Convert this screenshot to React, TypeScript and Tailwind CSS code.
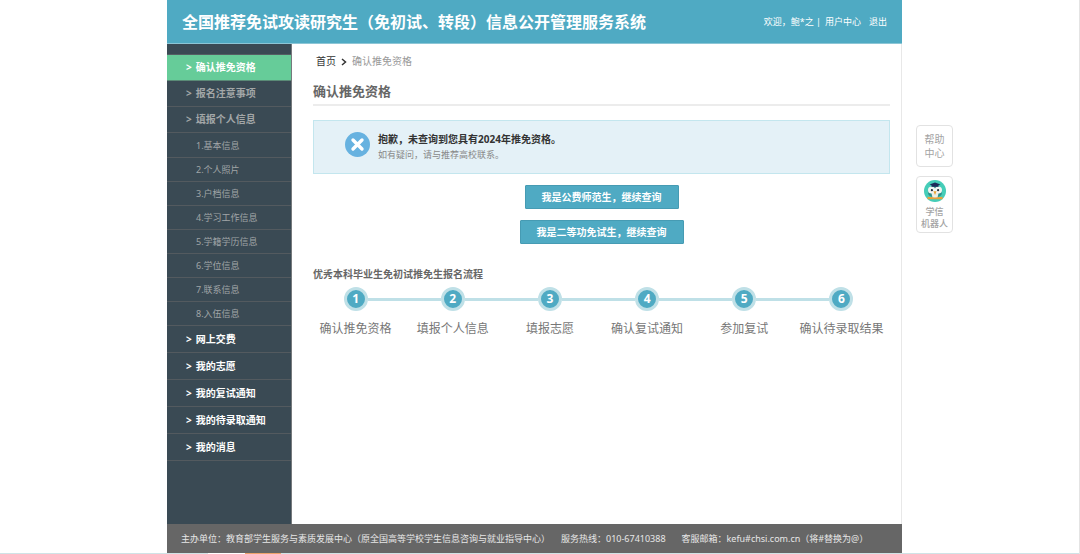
const intro = ["确认推免资格", "报名注意事项", "填报个人信息"];
const profile = [
  "1.基本信息",
  "2.个人照片",
  "3.户档信息",
  "4.学习工作信息",
  "5.学籍学历信息",
  "6.学位信息",
  "7.联系信息",
  "8.入伍信息",
];
const services = ["网上交费", "我的志愿", "我的复试通知", "我的待录取通知", "我的消息"];
const steps = ["确认推免资格", "填报个人信息", "填报志愿", "确认复试通知", "参加复试", "确认待录取结果"];

function Header() {
  return (
    <header className="flex h-11 items-center justify-between border-b border-[#8cc6d6] bg-[#4faac3] px-[15px] text-white">
      <h1 className="text-[16px] font-bold whitespace-nowrap">
        全国推荐免试攻读研究生（免初试、转段）信息公开管理服务系统
      </h1>
      <div className="flex text-[9px] whitespace-nowrap">
        <span>欢迎，鲍*之 |</span>
        <a href="#user" className="ml-1">用户中心</a>
        <a href="#logout" className="ml-2">退出</a>
      </div>
    </header>
  );
}

function Sidebar() {
  return (
    <nav className="w-[125px] shrink-0 border-r border-[#75797c] bg-[#3a4a54] pt-[10px]">
      <ul className="border-t border-[#555e64] pb-px text-[10px] font-bold">
        {intro.map((label, i) => (
          <li key={label}>
            <a
              href="#"
              className={
                i === 0
                  ? "flex h-[26px] items-center gap-1 border-b border-[#5a8a76] bg-[#66cc99] pl-[19px] text-white"
                  : "flex h-[26px] items-center gap-1 border-b border-[#535a5f] pl-[19px] text-[#a3a7a8]"
              }
            >
              <span>&gt;</span>
              {label}
            </a>
          </li>
        ))}
      </ul>
      <ul className="text-[9px] text-[#a0a5a7]">
        {profile.map((label) => (
          <li key={label}>
            <a href="#" className="flex h-6 items-center border-b border-[#535a5f] pl-[29px]">
              {label}
            </a>
          </li>
        ))}
      </ul>
      <ul className="text-[10px] font-bold text-white">
        {services.map((label) => (
          <li key={label}>
            <a href="#" className="flex h-[27px] items-center gap-1 border-b border-[#535a5f] pl-[19px]">
              <span>&gt;</span>
              {label}
            </a>
          </li>
        ))}
      </ul>
    </nav>
  );
}

function Steps() {
  return (
    <ol className="-ml-[6px] mt-[5px] grid grid-cols-6">
      {steps.map((label, i) => (
        <li key={label} className="flex flex-col items-center">
          <div className="flex w-full items-center">
            <span className={i === 0 ? "h-[3px] flex-1" : "h-[3px] flex-1 bg-[#bfe0e7]"} />
            <span className="flex size-6 items-center justify-center rounded-full border-3 border-[#bfe0e7] bg-[#4faac3] text-[12px] leading-none font-bold text-white">
              {i + 1}
            </span>
            <span className={i === steps.length - 1 ? "h-[3px] flex-1" : "h-[3px] flex-1 bg-[#bfe0e7]"} />
          </div>
          <span className="mt-2 text-[12px] leading-5 whitespace-nowrap text-[#777]">{label}</span>
        </li>
      ))}
    </ol>
  );
}

function Content() {
  return (
    <main className="min-w-0 flex-1 border-r border-[#e8e8e8] pr-[11px] pl-[21px]">
      <div className="flex h-[35px] items-center pl-[3px] text-[10px]">
        <a href="#home" className="text-[#333]">首页</a>
        <svg viewBox="0 0 6 8" className="mx-[5px] h-2 w-1.5" fill="none" stroke="#333" strokeWidth="1.5">
          <path d="M1 1l3.5 3L1 7" />
        </svg>
        <span className="text-[#999]">确认推免资格</span>
      </div>
      <h2 className="flex h-[27px] items-center border-b-2 border-[#ececec] pt-px text-[13px] font-bold text-[#666]">
        确认推免资格
      </h2>
      <div className="mt-[14px] flex h-[54px] border border-[#c3e6ee] bg-[#e4f1f7] pt-[10px] pl-[31px]">
        <svg viewBox="0 0 25 25" className="mt-px size-[25px] shrink-0">
          <circle cx="12.5" cy="12.5" r="12.5" fill="#67b2e0" />
          <path d="M8 8l9 9M17 8l-9 9" stroke="#fff" strokeWidth="3.4" strokeLinecap="round" />
        </svg>
        <div className="ml-2">
          <p className="text-[10px] leading-4 font-bold text-[#333]">抱歉，未查询到您具有2024年推免资格。</p>
          <p className="text-[9px] leading-4 text-[#888]">如有疑问，请与推荐高校联系。</p>
        </div>
      </div>
      <div className="mt-[11px] flex flex-col items-center gap-[11px] text-[10px] font-bold text-white">
        <button type="button" className="h-6 rounded-[1px] border border-[#469bb3] bg-[#4faac3] px-4">
          我是公费师范生，继续查询
        </button>
        <button type="button" className="h-6 rounded-[1px] border border-[#469bb3] bg-[#4faac3] px-4">
          我是二等功免试生，继续查询
        </button>
      </div>
      <h3 className="mt-[22px] text-[10px] leading-4 font-bold text-[#666]">优秀本科毕业生免初试推免生报名流程</h3>
      <Steps />
    </main>
  );
}

function RobotIcon() {
  return (
    <svg viewBox="0 0 22 22" className="size-[22px]">
      <circle cx="11" cy="11" r="11" fill="#45cdb8" />
      <path d="M5 8.5c1-3 11-3 12 0l.8 5c-.6 5-13 5-13.6 0z" fill="#2f8f88" />
      <circle cx="7.6" cy="10" r="3.6" fill="#f3f6f3" />
      <circle cx="14.4" cy="10" r="3.6" fill="#f3f6f3" />
      <path d="M7.5 13h7l-1 5h-5z" fill="#e9efe6" />
      <circle cx="7.9" cy="10.2" r="1.1" fill="#26323c" />
      <circle cx="14.1" cy="10.2" r="1.1" fill="#26323c" />
      <path d="M9.4 11.2h3.2L11 15z" fill="#eda636" />
      <path d="M5.5 4.4L11 2.6l5.5 1.8L11 6.2z" fill="#1f2b5a" />
      <path d="M7.5 5h7v1.8h-7z" fill="#1f2b5a" />
      <path d="M3.5 16.8l7.5.8 7.5-.8v2.4H3.5z" fill="#e9a23b" />
    </svg>
  );
}

function HelpTools() {
  return (
    <aside className="flex flex-col items-start gap-[9px] pt-[125px] pl-[14px] text-[#a3a3a3]">
      <a
        href="#help"
        className="flex h-[42px] w-[37px] flex-col items-center justify-center rounded-sm border border-[#e2e2e2] text-[10px] leading-[14px]"
      >
        <span>帮助</span>
        <span>中心</span>
      </a>
      <a
        href="#robot"
        className="flex h-[57px] w-[37px] flex-col items-center rounded-sm border border-[#e2e2e2] pt-[3px] text-[9px] leading-3 font-medium"
      >
        <RobotIcon />
        <span className="mt-1">学信</span>
        <span>机器人</span>
      </a>
    </aside>
  );
}

function Footer() {
  return (
    <footer className="flex h-[29px] items-center bg-[#666] pl-[14px] text-[9px] whitespace-nowrap text-[#e6e6e6]">
      <span>主办单位：教育部学生服务与素质发展中心（原全国高等学校学生信息咨询与就业指导中心）</span>
      <span className="ml-[11px]">服务热线：010-67410388</span>
      <span className="ml-4">客服邮箱：kefu#chsi.com.cn（将#替换为@）</span>
    </footer>
  );
}

export default function App() {
  return (
    <div className="flex min-h-screen flex-col border-r border-[#e4e4e4] bg-white font-['Noto_Sans','Noto_Sans_CJK_SC',sans-serif]">
      <div className="grid flex-1 grid-cols-[minmax(0,1fr)_minmax(0,735px)_minmax(0,1fr)] pr-[10px]">
        <div />
        <div className="flex flex-col">
          <Header />
          <div className="flex flex-1">
            <Sidebar />
            <Content />
          </div>
          <Footer />
        </div>
        <HelpTools />
      </div>
      <div className="flex h-px bg-[#cfe3e6]">
        <span className="ml-[208px] w-[37px] bg-white" />
        <span className="w-9 bg-[#eea36c]" />
      </div>
    </div>
  );
}
